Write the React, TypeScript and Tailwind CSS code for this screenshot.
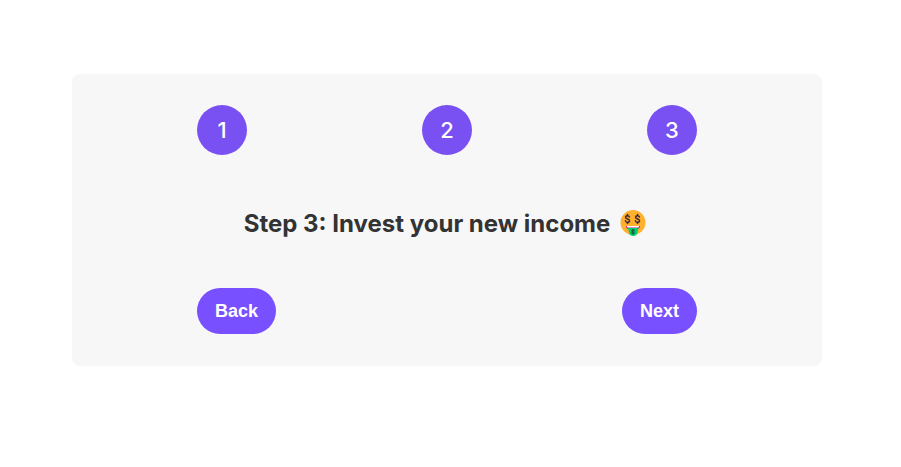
import { useState } from "react";

const steps = [1, 2, 3];
const messages = ["Learn React", "Apply for jobs", "Invest your new income"];

function DollarSign({ transform, width }: { transform: string; width: number }) {
  return (
    <g transform={transform} fill="none" stroke="#402a32" strokeWidth={width} strokeLinecap="round">
      <path d="M3.8 -4C3.3 -5.7 2 -6.6 0 -6.6C-2.4 -6.6 -3.8 -5.3 -3.8 -3.4C-3.8 0.8 4 -0.8 4 3.4C4 5.4 2.4 6.6 0 6.6C-2.2 6.6 -3.7 5.6 -4.1 3.7" />
      <path d="M0 -9V-7M0 7V9" />
    </g>
  );
}

function MoneyFace() {
  return (
    <svg viewBox="0 0 52 56" className="h-7 w-[26px] shrink-0" role="img" aria-label="Money-mouth face">
      <circle cx="26" cy="25" r="25" fill="#ffb02e" />
      <DollarSign transform="translate(15 18)" width={3} />
      <DollarSign transform="translate(35 18)" width={3} />
      <path d="M12 32H40C40 36 38 38 35 38H17C14 38 12 36 12 32Z" fill="#bb1d80" />
      <path d="M14 32H38V33C38 34.5 37 35 36 35H16C15 35 14 34.5 14 33Z" fill="#fff" />
      <path d="M16 36H37L35 45C34 50 31 52 26.5 52C22 52 19 50 18 45Z" fill="#00d26a" />
      <ellipse cx="26" cy="43.5" rx="4.5" ry="6" fill="#008463" opacity="0.5" />
      <DollarSign transform="translate(26 43.5) scale(.5)" width={3} />
    </svg>
  );
}

const buttonClass =
  "cursor-pointer rounded-full bg-[#7950ff] px-[18px] py-[11px] font-['Liberation_Sans',Arial,sans-serif] text-lg leading-6 font-bold text-white";

export default function App() {
  const [step, setStep] = useState(3);

  return (
    <main className="pt-[74px] pr-[7px] font-[Inter,sans-serif] text-[#333]">
      <section className="mx-auto max-w-[750px] rounded-lg bg-[#f7f7f7] px-[125px] pt-[31px] pb-8">
        <ol className="flex justify-between">
          {steps.map((n) => (
            <li
              key={n}
              className={`flex size-[50px] items-center justify-center rounded-full text-[22px] font-medium ${
                step >= n ? "bg-[#7950f2] text-white" : "bg-[#e7e7e7]"
              }`}
            >
              {n}
            </li>
          ))}
        </ol>

        <div className="flex items-center justify-center gap-2.5 pt-[53px] pr-1 pb-12">
          <h1 className="text-2xl font-bold whitespace-nowrap">
            Step {step}: {messages[step - 1]}
          </h1>
          <MoneyFace />
        </div>

        <div className="flex justify-between">
          <button type="button" className={buttonClass} onClick={() => setStep((s) => Math.max(1, s - 1))}>
            Back
          </button>
          <button type="button" className={buttonClass} onClick={() => setStep((s) => Math.min(3, s + 1))}>
            Next
          </button>
        </div>
      </section>
    </main>
  );
}
